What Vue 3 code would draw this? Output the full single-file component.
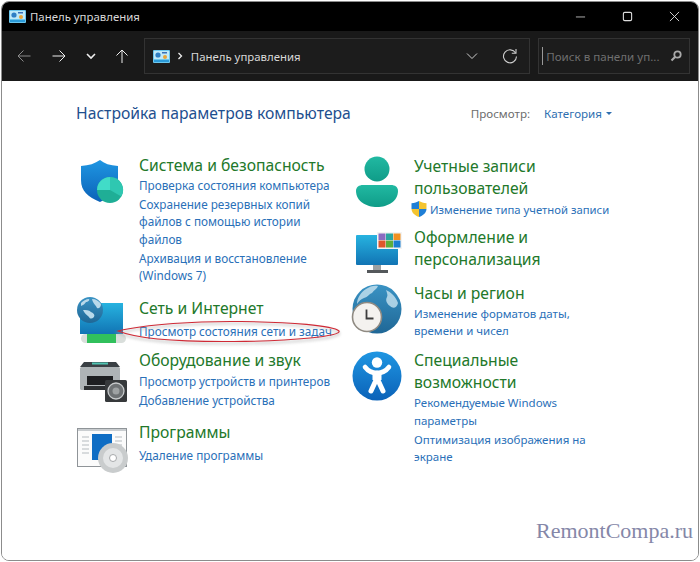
<template>
  <div class="page">
    <div class="window">
      <header class="titlebar">
        <svg class="cp-icon" viewBox="0 0 17 13">
          <rect width="17" height="13" rx="1" fill="#6cc6ec" />
          <rect x="1" y="1" width="15" height="8" fill="#bfe9f8" />
          <circle cx="5" cy="5" r="2.6" fill="#2f7fc4" />
          <rect x="9" y="2" width="5" height="1.5" fill="#3a6fb5" />
          <circle cx="12" cy="7" r="2" fill="#e7a437" />
          <rect x="1" y="10" width="15" height="2" fill="#2b9ad8" />
        </svg>
        <span class="title">Панель управления</span>
        <div class="win-buttons">
          <svg viewBox="0 0 12 12"><path d="M1 6.5h10" stroke="#bbb" /></svg>
          <svg viewBox="0 0 12 12"><rect x="1.5" y="1.5" width="9" height="9" rx="1.5" fill="none" stroke="#ddd" stroke-width="1.2" /></svg>
          <svg viewBox="0 0 12 12"><path d="M1 1l10 10M11 1L1 11" stroke="#ddd" /></svg>
        </div>
      </header>

      <div class="toolbar">
        <nav class="nav">
          <svg viewBox="0 0 14 14"><path d="M13.5 7H1M6.5 1.5L1 7l5.5 5.5" stroke="#8a8a8a" /></svg>
          <svg viewBox="0 0 14 14"><path d="M.5 7H13M7.5 1.5L13 7l-5.5 5.5" stroke="#eee" /></svg>
          <svg class="small" viewBox="0 0 10 10"><path d="M1 3l4 4 4-4" stroke="#eee" stroke-width="1.6" /></svg>
          <svg class="up" viewBox="0 0 14 14"><path d="M7 14V1M1.5 6.5L7 1l5.5 5.5" stroke="#eee" /></svg>
        </nav>
        <div class="address">
          <svg class="cp-icon" viewBox="0 0 17 13">
            <rect width="17" height="13" rx="1" fill="#6cc6ec" />
            <rect x="1" y="1" width="15" height="8" fill="#bfe9f8" />
            <circle cx="5" cy="5" r="2.6" fill="#2f7fc4" />
            <rect x="9" y="2" width="5" height="1.5" fill="#3a6fb5" />
            <circle cx="12" cy="7" r="2" fill="#e7a437" />
            <rect x="1" y="10" width="15" height="2" fill="#2b9ad8" />
          </svg>
          <svg class="crumb" viewBox="0 0 6 8"><path d="M1.5 1l3 3-3 3" stroke="#eee" stroke-width="1.3" fill="none" /></svg>
          <span class="address-text">Панель управления</span>
          <svg class="drop" viewBox="0 0 12 8"><path d="M1 1.5L6 6.5l5-5" stroke="#ccc" fill="none" /></svg>
          <svg class="refresh" viewBox="0 0 16 16">
            <path d="M13.6 5A6.5 6.5 0 1 0 14.5 8.5" stroke="#ccc" stroke-width="1.1" fill="none" />
            <path d="M14 1v4.2H9.8" stroke="#ccc" stroke-width="1.1" fill="none" />
          </svg>
        </div>
        <div class="search">
          <span class="caret"></span>
          <span class="placeholder">Поиск в панели уп...</span>
          <svg class="loupe" viewBox="0 0 12 12">
            <circle cx="7.5" cy="4.5" r="3.2" fill="none" stroke="#aaa" stroke-width="1.8" />
            <path d="M5 7L1.5 10.5" stroke="#aaa" stroke-width="2.2" />
          </svg>
        </div>
      </div>

      <main class="content">
        <div class="head">
          <h1>Настройка параметров компьютера</h1>
          <div class="view">
            <span class="view-label">Просмотр:</span>
            <span class="view-value">Категория</span>
            <span class="view-arrow"></span>
          </div>
        </div>

        <div class="columns">
          <div class="column" v-for="(col, i) in columns" :key="i">
            <section
              class="cat"
              v-for="cat in col"
              :key="cat.title"
              :style="{ marginBottom: cat.gap + 'px' }"
            >
              <svg class="icon" viewBox="0 0 50 40">
                <defs>
                  <linearGradient id="gBlue" x1="0" y1="0" x2="0" y2="1">
                    <stop offset="0" stop-color="#1f96e2" />
                    <stop offset="1" stop-color="#0b62b8" />
                  </linearGradient>
                  <linearGradient id="gScreen" x1="0" y1="0" x2="0" y2="1">
                    <stop offset="0" stop-color="#27b3e0" />
                    <stop offset="1" stop-color="#1174b4" />
                  </linearGradient>
                  <linearGradient id="gTeal" x1="0" y1="0" x2="0" y2="1">
                    <stop offset="0" stop-color="#21b9a2" />
                    <stop offset="1" stop-color="#0f9c88" />
                  </linearGradient>
                  <linearGradient id="gGlobe" x1="0" y1="0" x2="0" y2="1">
                    <stop offset="0" stop-color="#3a93c4" />
                    <stop offset="1" stop-color="#1f6796" />
                  </linearGradient>
                </defs>

                <g v-if="cat.icon === 'shield'">
                  <path d="M23 6c4 3.500 10 5.500 18 6v14c0 11-7 17-18 22C11 43 4 37 4 26V12c8-.5 14-2.500 19-6z" fill="url(#gBlue)" />
                  <circle cx="33" cy="36" r="13" fill="#1fae96" />
                  <path d="M33 36V23a13 13 0 0 1 11.300 19.500z" fill="#2fc7b1" />
                  <path d="M33 36V23a13 13 0 0 0-13 13z" fill="#41dcc8" />
                </g>

                <g v-else-if="cat.icon === 'network'">
                  <rect x="3" y="6" width="43" height="31" fill="url(#gScreen)" />
                  <circle cx="13" cy="13" r="13" fill="url(#gGlobe)" />
                  <path d="M4 6c2-2 5-4 8-4 1 1-1 3-3 3-1 2-3 3-5 4zM15 2c4 0 7 2 9 5 0 3-2 5-4 4-1-3-4-4-5-9zM6 13c3 0 6 0 8 2 3 1 4 3 3 5-2 2-4 2-5 0-2-2-5-4-6-7z" fill="#b9d9ea" />
                  <rect x="4" y="37" width="45" height="9" rx="4.500" fill="#d9dedb" />
                  <rect x="10" y="37" width="29" height="9" fill="#31c05c" />
                </g>

                <g v-else-if="cat.icon === 'printer'">
                  <path d="M7 13h32l4 5H3z" fill="#3a4044" />
                  <rect x="15" y="13.500" width="16" height="2" fill="#4fc4b2" />
                  <rect x="3" y="18" width="40" height="23" rx="1.500" fill="#aeb4b6" />
                  <rect x="10" y="27" width="26" height="9" fill="#1d1f21" />
                  <rect x="7" y="37" width="26" height="4" fill="#2c2f31" />
                  <rect x="28" y="31" width="22" height="22" rx="1.500" fill="#36393b" />
                  <circle cx="39" cy="42" r="8" fill="#6e7274" stroke="#c8cbcc" stroke-width="1.300" />
                  <circle cx="39" cy="42" r="3.500" fill="#9ea2a3" />
                </g>

                <g v-else-if="cat.icon === 'programs'">
                  <rect x=".5" y="7.500" width="49" height="38" fill="#fbfbfb" stroke="#8f9498" />
                  <rect x="1" y="8" width="48" height="2" fill="#c9cdd0" />
                  <path d="M5 16h7M5 20h7M5 24h7M5 28h7M5 32h7M38 16h7M38 20h7M38 24h7" stroke="#cdd1d4" stroke-width="1.300" />
                  <rect x="15" y="13" width="20" height="26" fill="#0f6dc4" />
                  <circle cx="36" cy="37" r="15" fill="#c9cccd" />
                  <circle cx="36" cy="37" r="10" fill="#e3e5e6" />
                  <circle cx="36" cy="37" r="3.500" fill="#fff" stroke="#a5a8aa" />
                </g>

                <g v-else-if="cat.icon === 'user'">
                  <circle cx="25" cy="14" r="12.500" fill="url(#gTeal)" />
                  <path d="M11 30h28c4 0 7 2 7 6 0 10-10 16-21 16S4 46 4 36c0-4 3-6 7-6z" fill="url(#gTeal)" />
                </g>

                <g v-else-if="cat.icon === 'monitor'">
                  <rect x="4" y="9" width="42" height="30" rx="1" fill="url(#gScreen)" />
                  <rect x="21" y="39" width="8" height="5" fill="#9ca0a2" />
                  <rect x="15" y="44" width="21" height="3" fill="#54585b" />
                  <rect x="25" y="6" width="25" height="17" fill="#f3f3f3" />
                  <rect x="26.500" y="7.500" width="7" height="6.500" fill="#8a6bc0" />
                  <rect x="34" y="7.500" width="7" height="6.500" fill="#2aa5a0" />
                  <rect x="41.500" y="7.500" width="7" height="6.500" fill="#f09020" />
                  <rect x="26.500" y="14.500" width="7" height="7" fill="#e0562a" />
                  <rect x="34" y="14.500" width="7" height="7" fill="#5cae3c" />
                  <rect x="41.500" y="14.500" width="7" height="7" fill="#1a7fd0" />
                </g>

                <g v-else-if="cat.icon === 'globe'">
                  <circle cx="25" cy="27" r="24.500" fill="url(#gGlobe)" />
                  <path d="M14 7c4-3 9-4 12-3-1 3-4 4-6 7-3 1-4 4-8 5-3 1-5 3-7 6 0-6 4-12 9-15zM34 8c5 2 10 7 12 13-1 5-5 6-8 3-3-2-5-6-3-9 1-2 0-4-1-7z" fill="#c9e3f0" opacity=".8" />
                  <circle cx="15" cy="35" r="14.500" fill="#f4f2ef" stroke="#8f8a82" stroke-width="1.600" />
                  <path d="M14.500 27.500v9h7" fill="none" stroke="#3d3d3d" stroke-width="1.800" />
                </g>

                <g v-else-if="cat.icon === 'access'">
                  <circle cx="25" cy="27" r="24.500" fill="url(#gBlue)" />
                  <circle cx="25" cy="13.500" r="5.200" fill="#fff" />
                  <path d="M13 18c3 4 7 6 12 6s9-2 12-6" fill="none" stroke="#fff" stroke-width="4.600" stroke-linecap="round" />
                  <path d="M25 24v6M25 29l-6 13M25 29l6 13" fill="none" stroke="#fff" stroke-width="5" stroke-linecap="round" />
                  <rect x="20.500" y="22" width="9" height="9" fill="#fff" />
                </g>
              </svg>

              <div class="cat-text">
                <h2 :style="{ marginBottom: cat.drop + 'px' }">{{ cat.title }}</h2>
                <a class="link" :class="{ uacrow: l.uac }" v-for="l in cat.links" :key="l.text">
                  <svg v-if="l.uac" class="uac" viewBox="0 0 16 16">
                    <path d="M8 0c2 1.300 4.500 2 7.500 2.200V8H8z" fill="#f4c430" />
                    <path d="M8 0C6 1.300 3.500 2 .5 2.200V8H8z" fill="#1f7fd6" />
                    <path d="M.5 8C.8 12 4 14.500 8 16V8z" fill="#f4c430" />
                    <path d="M15.500 8C15.200 12 12 14.500 8 16V8z" fill="#1f7fd6" />
                  </svg>{{ l.text }}
                </a>
              </div>
            </section>
          </div>
        </div>

        <!-- red marker drawn over the screenshot -->
        <svg class="marker" viewBox="0 0 226 26">
          <defs>
            <filter id="soft" x="-5%" y="-40%" width="110%" height="180%"><feGaussianBlur stdDeviation="1.500" /></filter>
          </defs>
          <path d="M2 14C30 7 80 4 125 4.500c50 .5 92 4 98 9.500 3 5-45 10-105 10.500C60 25 22 22 2 14z" fill="none" stroke="#a8a8a8" stroke-width="2" opacity=".55" filter="url(#soft)" />
          <path d="M2 12C30 5 80 2 125 2.500c50 .5 92 4 98 9.500 3 5-45 10-105 10.500C60 23 22 20 2 12z" fill="none" stroke="#cf2a36" stroke-width="1.100" />
        </svg>
      </main>
    </div>
    <div class="watermark">RemontCompa.ru</div>
  </div>
</template>

<script setup>
const columns = [
  [
    {
      icon: 'shield',
      title: 'Система и безопасность',
      gap: 12,
      drop: -1,
      links: [
        { text: 'Проверка состояния компьютера' },
        { text: 'Сохранение резервных копий файлов с помощью истории файлов' },
        { text: 'Архивация и восстановление (Windows 7)' },
      ],
    },
    {
      icon: 'network',
      title: 'Сеть и Интернет',
      gap: 9,
      drop: 4,
      links: [{ text: 'Просмотр состояния сети и задач' }],
    },
    {
      icon: 'printer',
      title: 'Оборудование и звук',
      gap: 12,
      drop: 0,
      links: [{ text: 'Просмотр устройств и принтеров' }, { text: 'Добавление устройства' }],
    },
    {
      icon: 'programs',
      title: 'Программы',
      gap: 0,
      drop: 4,
      links: [{ text: 'Удаление программы' }],
    },
  ],
  [
    {
      icon: 'user',
      title: 'Учетные записи пользователей',
      gap: 8,
      drop: 0,
      links: [{ text: 'Изменение типа учетной записи', uac: true }],
    },
    {
      icon: 'monitor',
      title: 'Оформление и персонализация',
      gap: 12,
      drop: 0,
      links: [],
    },
    {
      icon: 'globe',
      title: 'Часы и регион',
      gap: 9,
      drop: -1,
      links: [{ text: 'Изменение форматов даты, времени и чисел' }],
    },
    {
      icon: 'access',
      title: 'Специальные возможности',
      gap: 0,
      drop: 0,
      links: [{ text: 'Рекомендуемые Windows параметры' }, { text: 'Оптимизация изображения на экране' }],
    },
  ],
]
</script>

<style>
html,
body {
  margin: 0;
  background: #fff;
}
</style>

<style scoped>
.page {
  position: relative;
  box-sizing: border-box;
  width: 700px;
  height: 562px;
  padding: 1px;
  overflow: hidden;
  background: #fff;
  font-family: "Noto Sans", "Liberation Sans", sans-serif;
}

.window {
  box-sizing: border-box;
  height: 100%;
  border: 1px solid #8c8c8c;
  border-radius: 8px;
  overflow: hidden;
  display: flex;
  flex-direction: column;
}

.titlebar {
  flex: none;
  height: 29px;
  background: #000;
  display: flex;
  align-items: center;
  padding-left: 7px;
}

.cp-icon {
  width: 17px;
  height: 13px;
  flex: none;
}

.title {
  margin-left: 4px;
  color: #d8d8d8;
  font-size: 11.400px;
}

.win-buttons {
  margin-left: auto;
  display: flex;
  gap: 36px;
  padding-right: 18px;
}

.win-buttons svg {
  width: 11px;
  height: 11px;
  display: block;
}

.toolbar {
  flex: none;
  height: 50px;
  background: #191919;
  display: flex;
  align-items: center;
  box-sizing: border-box;
  padding: 0 8px 0 15px;
}

.nav {
  display: flex;
  align-items: center;
  gap: 21px;
  width: 127px;
}

.nav svg {
  width: 14px;
  height: 14px;
  fill: none;
  flex: none;
}

.nav svg.small {
  width: 10px;
  height: 10px;
  margin-left: -1px;
}

.nav svg.up {
  margin-left: -2px;
}

.address,
.search {
  box-sizing: border-box;
  height: 36px;
  border: 1px solid #333;
  background: #1c1c1c;
  display: flex;
  align-items: center;
}

.address {
  width: 387px;
  padding-left: 8px;
}

.crumb {
  width: 6px;
  height: 8px;
  margin-left: 7px;
}

.address-text {
  margin-left: 8px;
  color: #d8d8d8;
  font-size: 11.400px;
}

.drop {
  width: 12px;
  height: 8px;
  margin-left: auto;
}

.refresh {
  width: 16px;
  height: 16px;
  margin: 0 11px 0 24px;
}

.search {
  width: 152px;
  margin-left: 8px;
  padding-left: 3px;
}

.caret {
  width: 1px;
  height: 18px;
  background: #999;
}

.placeholder {
  margin-left: 3px;
  color: #6f6f6f;
  font-size: 11.600px;
  white-space: nowrap;
}

.loupe {
  width: 12px;
  height: 12px;
  margin-left: auto;
  margin-right: 7px;
}

.content {
  position: relative;
  flex: 1;
  background: #fff;
  padding: 0 0 0 74px;
}

.head {
  display: flex;
  align-items: center;
  height: 42px;
  margin-top: 11px;
  margin-bottom: 20px;
  padding-right: 86px;
}

h1 {
  margin: 0;
  font-size: 15.700px;
  font-weight: 400;
  color: #1e4f8f;
}

.view {
  margin-left: auto;
  display: flex;
  align-items: center;
  font-size: 11.600px;
}

.view-label {
  color: #6d6d6d;
}

.view-value {
  margin-left: 14px;
  color: #2f6fb0;
}

.view-arrow {
  margin-left: 4px;
  border-left: 3px solid transparent;
  border-right: 3px solid transparent;
  border-top: 3px solid #2f6fb0;
}

.columns {
  display: flex;
}

.column {
  width: 276px;
}

.column + .column {
  margin-top: 1px;
}

.cat {
  display: flex;
  align-items: flex-start;
}

.icon {
  flex: none;
  width: 50px;
  height: 40px;
  margin-right: 12px;
  overflow: visible;
}

.column:first-child .icon {
  margin-left: 1px;
}

.cat-text {
  width: 198px;
}

h2 {
  margin: 0;
  font-size: 15.700px;
  line-height: 22px;
  font-weight: 400;
  color: #22782a;
}

.link {
  display: block;
  margin-top: 1.500px;
  font-size: 11.750px;
  line-height: 17.500px;
  color: #2a70b8;
}

.column + .column .link {
  font-size: 11.500px;
}

.column + .column .link.uacrow {
  font-size: 11.300px;
  white-space: nowrap;
}

.uac {
  width: 16px;
  height: 16px;
  margin-left: -3px;
  margin-right: 3px;
  vertical-align: -3px;
}

.marker {
  position: absolute;
  left: 114px;
  top: 238px;
  width: 226px;
  height: 26px;
  overflow: visible;
}

.watermark {
  position: absolute;
  left: 536px;
  top: 518px;
  font-family: "Liberation Serif", serif;
  font-size: 22px;
  color: #8587a8;
}
</style>
